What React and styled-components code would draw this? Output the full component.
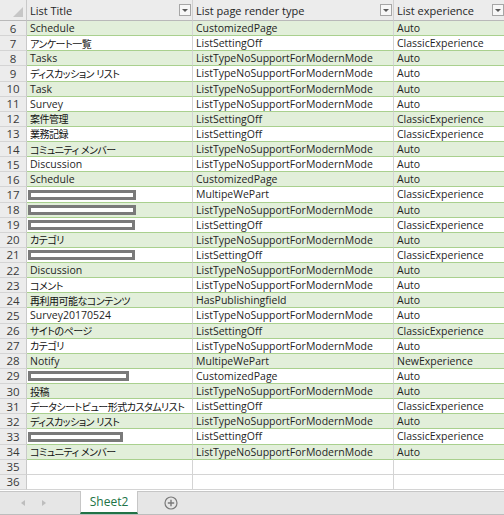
import React from 'react';
import styled, { createGlobalStyle } from 'styled-components';

const ROW_H = 'calc(469px / 31)';
const CJK = /[\u3040-\u30ff\u4e00-\u9fff]/;

const rows = [
  [6, 'Schedule', 'CustomizedPage', 'Auto'],
  [7, 'アンケート一覧', 'ListSettingOff', 'ClassicExperience'],
  [8, 'Tasks', 'ListTypeNoSupportForModernMode', 'Auto'],
  [9, 'ディスカッション リスト', 'ListTypeNoSupportForModernMode', 'Auto'],
  [10, 'Task', 'ListTypeNoSupportForModernMode', 'Auto'],
  [11, 'Survey', 'ListTypeNoSupportForModernMode', 'Auto'],
  [12, '案件管理', 'ListSettingOff', 'ClassicExperience'],
  [13, '業務記録', 'ListSettingOff', 'ClassicExperience'],
  [14, 'コミュニティ メンバー', 'ListTypeNoSupportForModernMode', 'Auto'],
  [15, 'Discussion', 'ListTypeNoSupportForModernMode', 'Auto'],
  [16, 'Schedule', 'CustomizedPage', 'Auto'],
  [17, 108, 'MultipeWePart', 'ClassicExperience'],
  [18, 108, 'ListTypeNoSupportForModernMode', 'Auto'],
  [19, 107, 'ListSettingOff', 'ClassicExperience'],
  [20, 'カテゴリ', 'ListTypeNoSupportForModernMode', 'Auto'],
  [21, 107, 'ListSettingOff', 'ClassicExperience'],
  [22, 'Discussion', 'ListTypeNoSupportForModernMode', 'Auto'],
  [23, 'コメント', 'ListTypeNoSupportForModernMode', 'Auto'],
  [24, '再利用可能なコンテンツ', 'HasPublishingfield', 'Auto'],
  [25, 'Survey20170524', 'ListTypeNoSupportForModernMode', 'Auto'],
  [26, 'サイトのページ', 'ListSettingOff', 'ClassicExperience'],
  [27, 'カテゴリ', 'ListTypeNoSupportForModernMode', 'Auto'],
  [28, 'Notify', 'MultipeWePart', 'NewExperience'],
  [29, 101, 'CustomizedPage', 'Auto'],
  [30, '投稿', 'ListTypeNoSupportForModernMode', 'Auto'],
  [31, 'データシートビュー形式カスタムリスト', 'ListSettingOff', 'ClassicExperience'],
  [32, 'ディスカッション リスト', 'ListTypeNoSupportForModernMode', 'Auto'],
  [33, 95, 'ListSettingOff', 'ClassicExperience'],
  [34, 'コミュニティ メンバー', 'ListTypeNoSupportForModernMode', 'Auto'],
  [35, '', '', '', true],
  [36, '', '', '', true],
];

const GlobalStyle = createGlobalStyle`
  html, body {
    margin: 0;
    padding: 0;
    background: #ffffff;
    overflow: hidden;
  }
  body {
    font-family: "Open Sans", "Noto Sans CJK JP", sans-serif;
    font-feature-settings: "palt";
    color: #1f1f1f;
  }
`;

const Window = styled.div`
  width: 504px;
  height: 515px;
  display: flex;
  flex-direction: column;
  overflow: hidden;
`;

const Sheet = styled.div`
  display: grid;
  grid-template-columns: 27px 166px 201px 112px;
  grid-template-rows: 21px;
  grid-auto-rows: ${ROW_H};
  width: 506px;
`;

const Corner = styled.div`
  background: #ececec;
  border-right: 1px solid #c9c9c9;
  border-bottom: 1px solid #b9b9b9;
  position: relative;
  &::after {
    content: '';
    position: absolute;
    right: 3px;
    bottom: 3px;
    width: 0;
    height: 0;
    border-left: 10px solid transparent;
    border-bottom: 10px solid #c6c6c6;
  }
`;

const HeadCell = styled.div`
  background: #ececec;
  border-right: 1px solid #d0d0d0;
  border-bottom: 1px solid #b9b9b9;
  display: flex;
  align-items: center;
  justify-content: space-between;
  padding: 0 1px 0 3px;
  font-size: 11px;
  color: #262626;
  white-space: nowrap;
`;

const Filter = styled.span`
  width: 12px;
  height: 12px;
  box-sizing: border-box;
  border: 1px solid #a6a6a6;
  background: #f7f7f7;
  display: flex;
  align-items: center;
  justify-content: center;
  &::before {
    content: '';
    border-left: 3px solid transparent;
    border-right: 3px solid transparent;
    border-top: 3px solid #595959;
  }
`;

const RowNum = styled.div`
  background: #ececec;
  border-right: 1px solid #c9c9c9;
  border-bottom: 1px solid #d4d4d4;
  display: flex;
  align-items: center;
  justify-content: center;
  font-size: 11.5px;
  color: #3a3a3a;
  box-sizing: border-box;
`;

const Cell = styled.div`
  background: ${p => (p.$band ? '#e2efda' : '#ffffff')};
  border-right: 1px solid #d4d4d4;
  border-bottom: 1px solid ${p => (p.$plain ? '#d4d4d4' : '#a9d08e')};
  box-sizing: border-box;
  display: flex;
  align-items: center;
  padding-left: 3px;
  font-size: ${p => (p.$jp ? '10px' : '10.5px')};
  letter-spacing: ${p => (p.$jp ? '-0.5px' : '0')};
  color: ${p => (p.$jp ? '#111' : '#1f1f1f')};
  white-space: nowrap;
  overflow: hidden;
`;

const Redacted = styled.span`
  display: block;
  height: 10px;
  box-sizing: border-box;
  border: 3px solid #7a7a7a;
  background: #ffffff;
  margin-left: -2px;
  margin-top: 1px;
`;

const TabBar = styled.div`
  flex: 1;
  background: #e6e6e6;
  border-top: 1px solid #c6c6c6;
  border-bottom: 1px solid #bdbdbd;
  display: flex;
  align-items: stretch;
  margin-top: 1px;
`;

const Nav = styled.div`
  width: 80px;
  display: flex;
  align-items: center;
  gap: 17px;
  padding-left: 21px;
  box-sizing: border-box;
`;

const Arrow = styled.span`
  width: 0;
  height: 0;
  border-top: 3px solid transparent;
  border-bottom: 3px solid transparent;
  ${p => (p.$left ? 'border-right: 4px solid #bdbdbd;' : 'border-left: 4px solid #bdbdbd;')}
`;

const Tab = styled.div`
  width: 58px;
  margin-top: -1px;
  background: #ffffff;
  border-left: 1px solid #c6c6c6;
  border-right: 1px solid #c6c6c6;
  border-bottom: 2px solid #217346;
  box-sizing: border-box;
  display: flex;
  align-items: center;
  justify-content: center;
  font-size: 12px;
  color: #217346;
`;

const AddSheet = styled.div`
  width: 66px;
  display: flex;
  align-items: center;
  justify-content: center;
`;

const Label = ({ value }) =>
  typeof value === 'number' ? <Redacted style={{ width: value }} /> : value;

export default function App() {
  return (
    <Window>
      <GlobalStyle />
      <Sheet>
        <Corner />
        <HeadCell>List Title<Filter /></HeadCell>
        <HeadCell>List page render type<Filter /></HeadCell>
        <HeadCell>List experience<Filter /></HeadCell>
        {rows.map(([n, title, render, exp, plain]) => {
          const band = !plain && n % 2 === 0;
          const jp = typeof title === 'string' && CJK.test(title);
          return (
            <React.Fragment key={n}>
              <RowNum>{n}</RowNum>
              <Cell $band={band} $plain={plain} $jp={jp}><Label value={title} /></Cell>
              <Cell $band={band} $plain={plain}>{render}</Cell>
              <Cell $band={band} $plain={plain}>{exp}</Cell>
            </React.Fragment>
          );
        })}
      </Sheet>
      <TabBar>
        <Nav>
          <Arrow $left />
          <Arrow />
        </Nav>
        <Tab>Sheet2</Tab>
        <AddSheet>
          <svg width="14" height="14" viewBox="0 0 14 14">
            <circle cx="7" cy="7" r="6" fill="none" stroke="#7a7a7a" strokeWidth="1.2" />
            <path d="M7 3.8v6.4M3.8 7h6.4" stroke="#7a7a7a" strokeWidth="1.4" />
          </svg>
        </AddSheet>
      </TabBar>
    </Window>
  );
}
